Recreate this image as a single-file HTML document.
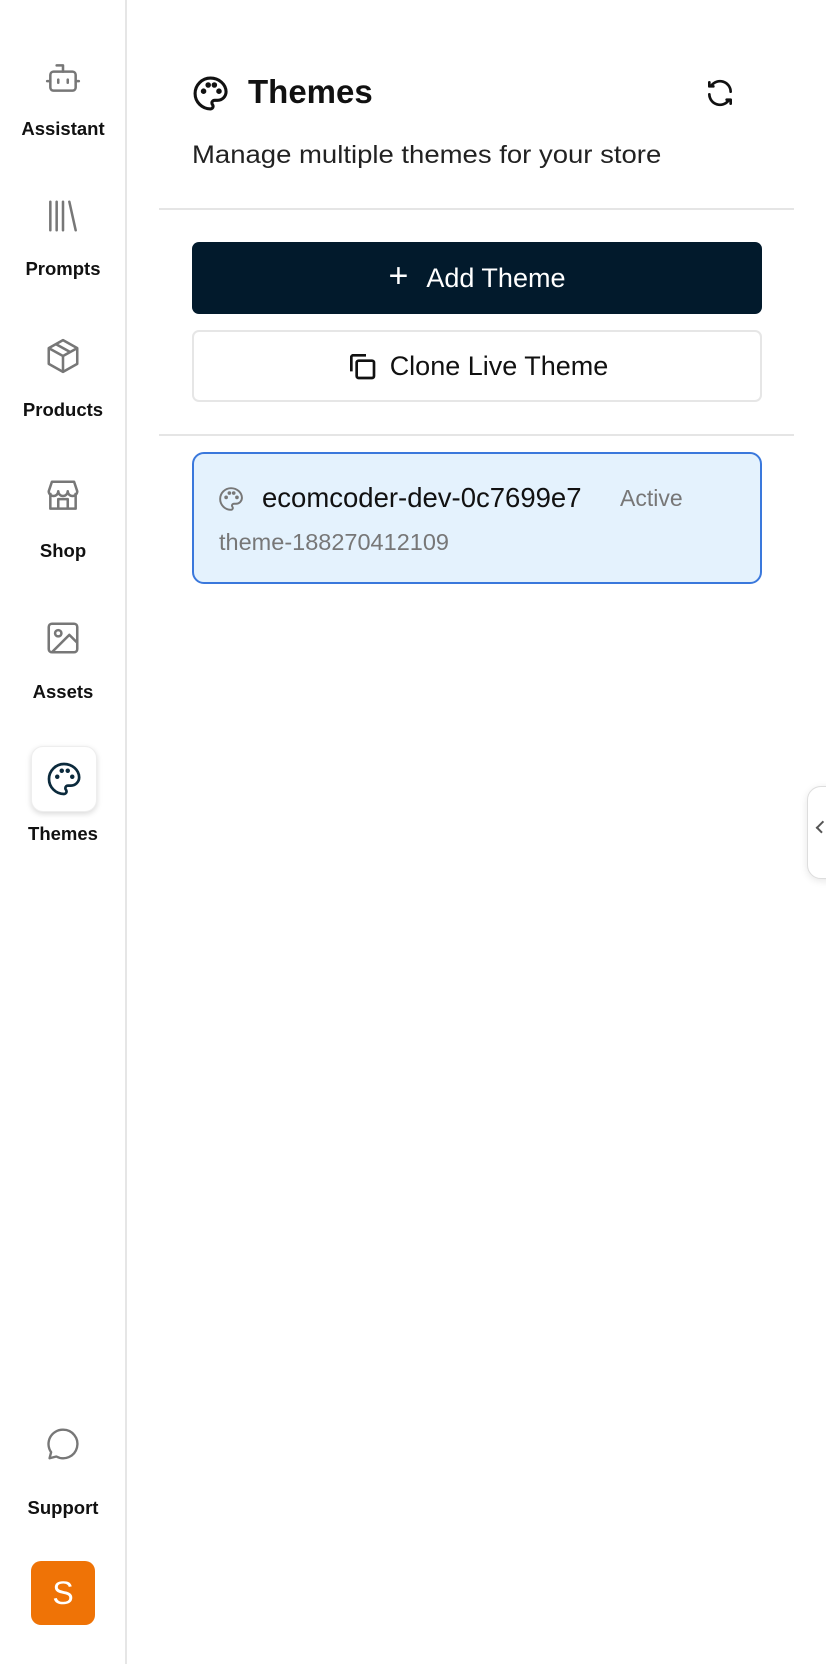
<!DOCTYPE html>
<html><head><meta charset="utf-8"><style>
*{box-sizing:border-box;margin:0;padding:0}
body{width:826px;height:1664px;background:#fff;font-family:"Liberation Sans",sans-serif;color:#111;position:relative;overflow:hidden}
.side{position:absolute;left:0;top:0;width:127px;height:1664px;border-right:2px solid #e6e6e6}
.lbl{position:absolute;left:0;width:126px;text-align:center;font-size:18.5px;font-weight:bold;color:#111}
.abs{position:absolute}
.btn{position:absolute;left:192px;width:570px;height:72px;border-radius:7px;display:flex;align-items:center;justify-content:center;font-size:27px}
</style></head><body>
<div class="side">
<svg class="abs" style="left:44px;top:59px" width="38" height="38" viewBox="0 0 24 24" fill="none" stroke="#777" stroke-width="1.6" stroke-linecap="round" stroke-linejoin="round"><path d="M12 8V4H8"/><rect x="4" y="8" width="16" height="12" rx="2"/><path d="M2 14h2M20 14h2M15 13v2M9 13v2"/></svg>
<div class="lbl" style="top:118px">Assistant</div>
<svg class="abs" style="left:44px;top:197px" width="38" height="38" viewBox="0 0 24 24" fill="none" stroke="#777" stroke-width="1.6" stroke-linecap="round"><path d="M4 3v18M8 3v18M12 3v18M16 3l4 18"/></svg>
<div class="lbl" style="top:258px">Prompts</div>
<svg class="abs" style="left:44px;top:337px" width="38" height="38" viewBox="0 0 24 24" fill="none" stroke="#777" stroke-width="1.6" stroke-linejoin="round"><path d="M12 2l9 5v10l-9 5-9-5V7z"/><path d="M3 7l9 5 9-5M12 12v10M7.5 4.5l9 5"/></svg>
<div class="lbl" style="top:399px">Products</div>
<svg class="abs" style="left:44px;top:477px" width="38" height="38" viewBox="0 0 24 24" fill="none" stroke="#777" stroke-width="1.6" stroke-linejoin="round"><path d="M4 10v10h16V10"/><path d="M3 9l2-6h14l2 6a3 3 0 0 1-6 0 3 3 0 0 1-6 0 3 3 0 0 1-6 0z"/><path d="M9 20v-6h6v6"/></svg>
<div class="lbl" style="top:540px">Shop</div>
<svg class="abs" style="left:44px;top:619px" width="38" height="38" viewBox="0 0 24 24" fill="none" stroke="#777" stroke-width="1.6" stroke-linejoin="round"><rect x="3" y="3" width="18" height="18" rx="2"/><circle cx="9" cy="9" r="2"/><path d="M21 15l-5-5L5 21"/></svg>
<div class="lbl" style="top:681px">Assets</div>
<div class="abs" style="left:31px;top:746px;width:66px;height:66px;border-radius:12px;background:#fff;box-shadow:0 2px 6px rgba(0,0,0,.15);border:1px solid #eee"></div>
<svg class="abs" style="left:46px;top:761px" width="36" height="36" viewBox="0 0 24 24" fill="none" stroke="#0b2a3c" stroke-width="1.8" stroke-linecap="round"><path d="M12 2C6.5 2 2 6.5 2 12s4.5 10 10 10c.9 0 1.7-.8 1.7-1.7 0-.4-.2-.8-.4-1.1-.3-.3-.4-.7-.4-1.1 0-.9.8-1.7 1.7-1.7h2c3 0 5.5-2.5 5.5-5.5C22 6 17.5 2 12 2z"/><circle cx="7.5" cy="10.5" r=".6" fill="#0b2a3c"/><circle cx="10.5" cy="6.5" r=".6" fill="#0b2a3c"/><circle cx="14.5" cy="6.5" r=".6" fill="#0b2a3c"/><circle cx="17.5" cy="10.5" r=".6" fill="#0b2a3c"/></svg>
<div class="lbl" style="top:823px">Themes</div>
<svg class="abs" style="left:44px;top:1425px" width="38" height="38" viewBox="0 0 24 24" fill="none" stroke="#777" stroke-width="1.5" stroke-linejoin="round"><path d="M12 3a9 9 0 1 1-4.2 16.9L3.5 21l1-3.8A9 9 0 0 1 12 3z"/></svg>
<div class="lbl" style="top:1497px">Support</div>
<div class="abs" style="left:31px;top:1561px;width:64px;height:64px;border-radius:10px;background:#ef7306;color:#fff;font-size:32px;display:flex;align-items:center;justify-content:center">S</div>
</div>

<svg class="abs" style="left:192px;top:75px" width="37" height="37" viewBox="0 0 24 24" fill="none" stroke="#111" stroke-width="2" stroke-linecap="round"><path d="M12 2C6.5 2 2 6.5 2 12s4.5 10 10 10c.9 0 1.7-.8 1.7-1.7 0-.4-.2-.8-.4-1.1-.3-.3-.4-.7-.4-1.1 0-.9.8-1.7 1.7-1.7h2c3 0 5.5-2.5 5.5-5.5C22 6 17.5 2 12 2z"/><circle cx="7.5" cy="10.5" r=".8" fill="#111"/><circle cx="10.5" cy="6.5" r=".8" fill="#111"/><circle cx="14.5" cy="6.5" r=".8" fill="#111"/><circle cx="17.5" cy="10.5" r=".8" fill="#111"/></svg>
<div class="abs" style="left:248px;top:73px;font-size:33px;font-weight:bold">Themes</div>
<svg class="abs" style="left:704px;top:77px" width="32" height="32" viewBox="0 0 24 24" fill="none" stroke="#111" stroke-width="2" stroke-linecap="round" stroke-linejoin="round"><path d="M20 11a8 8 0 0 0-14.5-4.5M4 4v3h3M4 13a8 8 0 0 0 14.5 4.5M20 20v-3h-3"/></svg>
<div class="abs" style="left:192px;top:141px;font-size:25px;color:#222;transform:scaleX(1.1);transform-origin:left">Manage multiple themes for your store</div>
<div class="abs" style="left:159px;top:208px;width:635px;height:2px;background:#e5e5e5"></div>
<div class="btn" style="top:242px;background:#021a2c;color:#fff"><span style="font-size:34px;font-weight:300;margin-right:18px;margin-top:-4px">+</span>Add Theme</div>
<div class="btn" style="top:330px;background:#fff;border:2px solid #e6e6e6;color:#111"><svg width="32" height="32" viewBox="0 0 24 24" fill="none" stroke="#111" stroke-width="2" stroke-linejoin="round" style="margin-right:12px"><rect x="8" y="8" width="13" height="13" rx="1.5"/><path d="M4 16V5a2 2 0 0 1 1-1h10"/></svg>Clone Live Theme</div>
<div class="abs" style="left:159px;top:434px;width:635px;height:2px;background:#e5e5e5"></div>
<div class="abs" style="left:192px;top:452px;width:570px;height:132px;border-radius:12px;background:#e4f2fd;border:2px solid #3a78dc"></div>
<svg class="abs" style="left:218px;top:486px" width="26" height="26" viewBox="0 0 24 24" fill="none" stroke="#777" stroke-width="1.8" stroke-linecap="round"><path d="M12 2C6.5 2 2 6.5 2 12s4.5 10 10 10c.9 0 1.7-.8 1.7-1.7 0-.4-.2-.8-.4-1.1-.3-.3-.4-.7-.4-1.1 0-.9.8-1.7 1.7-1.7h2c3 0 5.5-2.5 5.5-5.5C22 6 17.5 2 12 2z"/><circle cx="7.5" cy="10.5" r=".8" fill="#777"/><circle cx="10.5" cy="6.5" r=".8" fill="#777"/><circle cx="17.5" cy="10.5" r=".8" fill="#777"/><circle cx="14.5" cy="6.5" r=".8" fill="#777"/></svg>
<div class="abs" style="left:262px;top:482px;font-size:27.5px;color:#111">ecomcoder-dev-0c7699e7</div>
<div class="abs" style="left:620px;top:485px;font-size:23px;color:#777">Active</div>
<div class="abs" style="left:219px;top:529px;font-size:23.5px;color:#777">theme-188270412109</div>
<div class="abs" style="left:807px;top:786px;width:40px;height:93px;border-radius:14px;background:#fff;border:1px solid #ddd;box-shadow:0 2px 8px rgba(0,0,0,.1)"></div>
<div class="abs" style="left:818px;top:822px;width:8px;height:10px;border-left:2px solid #555;border-bottom:2px solid #555;transform:rotate(45deg)"></div>
</body></html>
